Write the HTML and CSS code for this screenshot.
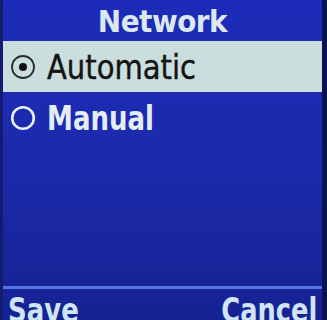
FILE: index.html
```html
<!DOCTYPE html>
<html>
<head>
<meta charset="utf-8">
<link rel="stylesheet" href="styles.css">
</head>
<body>
<div class="screen">
  <div class="title">Network</div>
  <ul class="list">
    <li class="item selected">
      <svg class="radio" width="26" height="26" viewBox="0 0 26 26"><circle cx="13" cy="13" r="11" fill="none" stroke="#2a2a2a" stroke-width="1.8"/><circle cx="13" cy="13" r="4" fill="#111"/></svg>
      <span class="label label-auto">Automatic</span>
    </li>
    <li class="item">
      <svg class="radio" width="26" height="26" viewBox="0 0 26 26"><circle cx="13" cy="13" r="10.8" fill="none" stroke="#e8f0f4" stroke-width="2.6"/></svg>
      <span class="label label-manual">Manual</span>
    </li>
  </ul>
  <div class="spacer"></div>
  <div class="softkeys">
    <span class="key key-left">Save</span>
    <span class="key key-right">Cancel</span>
  </div>
</div>
</body>
</html>
```
FILE: styles.css
```css
html, body { margin: 0; padding: 0; }
body { width: 327px; height: 320px; overflow: hidden; background: #0a0d40; }
.screen {
  width: 327px; height: 320px;
  display: flex; flex-direction: column;
  background: linear-gradient(180deg, #1c2cb8 0%, #1b2aac 50%, #162292 100%);
  font-family: "DejaVu Sans", sans-serif;
  font-stretch: condensed;
  color: #e4eef2;
  box-sizing: border-box;
  border-left: 3px solid #141c70;
  border-right: 5px solid #0c1250;
}
.title {
  height: 41px; line-height: 43px;
  text-align: center; font-weight: bold; font-size: 31px;
  letter-spacing: -0.5px;
  color: #dde8ee;
}
.list { list-style: none; margin: 0; padding: 0; }
.item {
  height: 51px; display: flex; align-items: center; gap: 11px;
  padding-left: 7px; font-size: 34px; font-weight: bold;
  white-space: nowrap;
}
.item.selected { background: #c9dedd; color: #141414; font-weight: normal; }
.radio { flex: none; }
.label { display: inline-block; line-height: 1; transform-origin: left center; }
.label-auto { transform: scaleX(0.95); -webkit-text-stroke: 0.4px #141414; }
.label-manual { transform: scaleX(0.85); }
.spacer { flex: 1; }
.softkeys {
  border-top: 3px solid #5474e6;
  height: 34px;
  box-sizing: border-box;
  padding: 1px 5px 0 5px;
  display: flex; justify-content: space-between; align-items: flex-start;
  font-weight: bold; font-size: 34px; line-height: 40px;
  color: #cfe4f4;
  white-space: nowrap;
}
.key { display: inline-block; }
.key-left { transform: scaleX(0.85); transform-origin: left top; }
.key-right { transform: scaleX(0.84); transform-origin: right top; }
```
